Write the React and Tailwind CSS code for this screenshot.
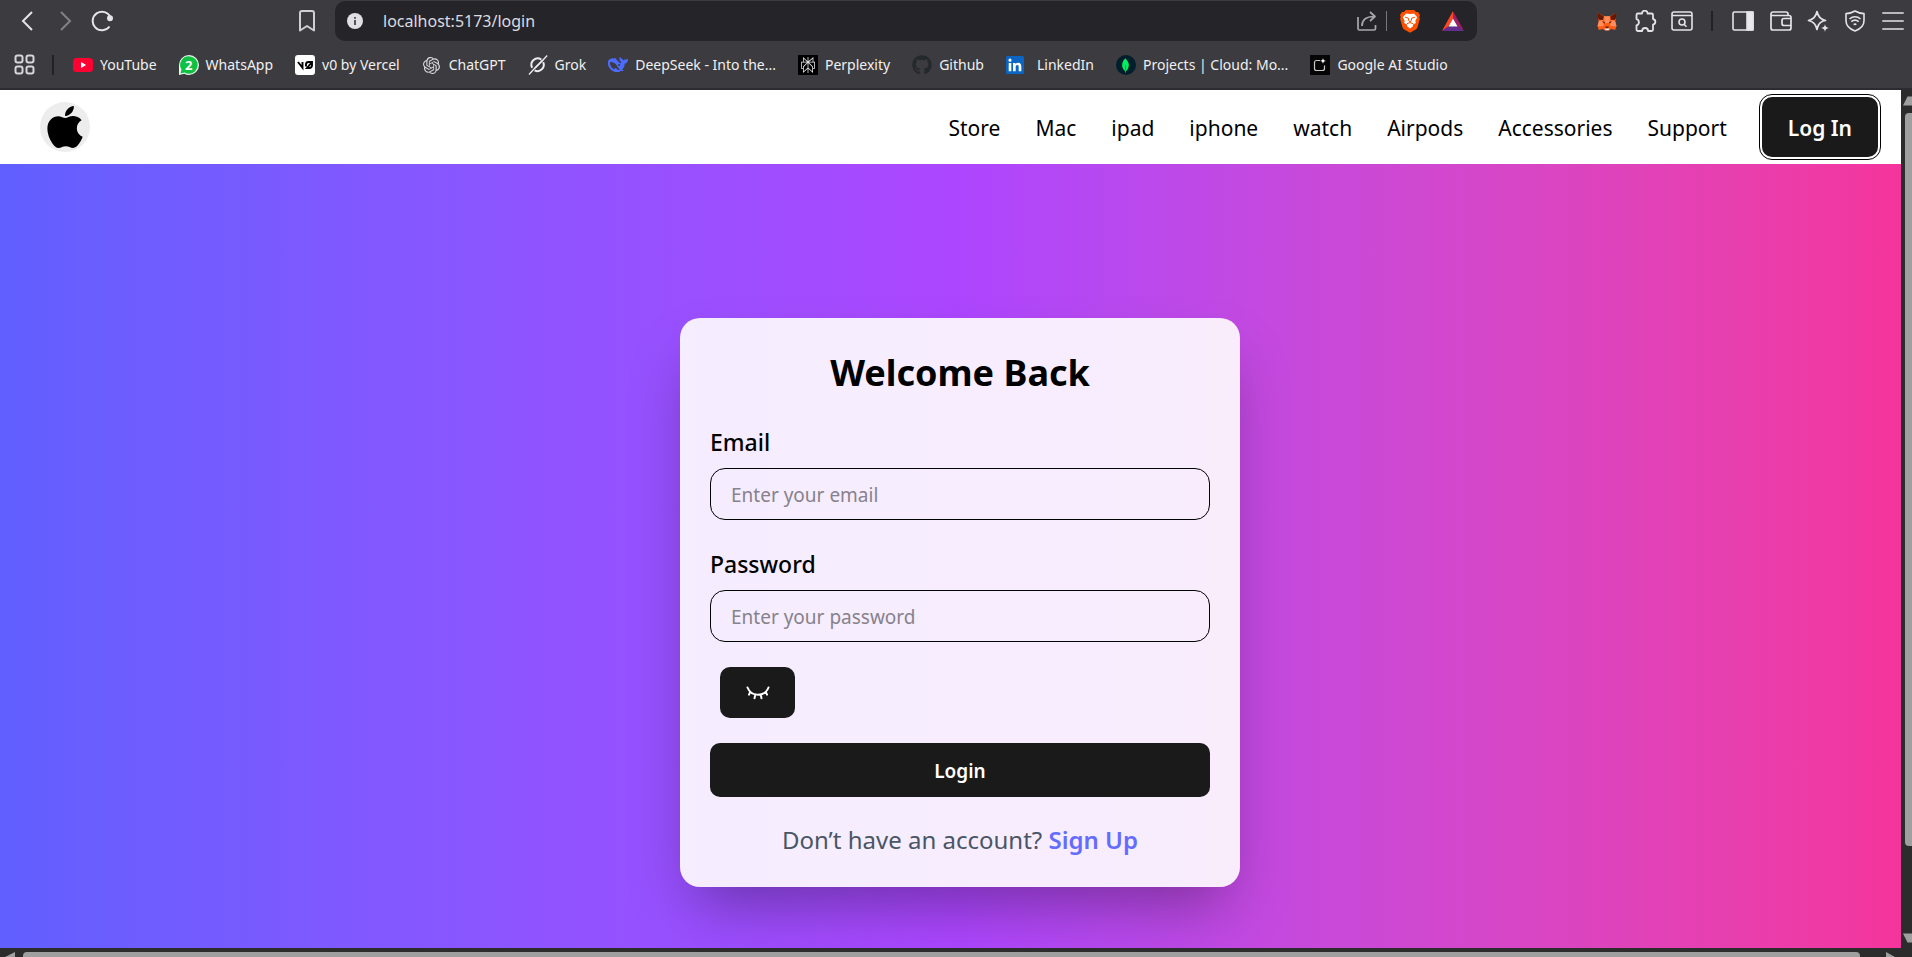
import React, { useState } from "react";
import { Eye } from "lucide-react";
import { FaApple, FaGithub } from "react-icons/fa";
import { SiOpenai, SiPerplexity, SiMongodb } from "react-icons/si";

function AppsIcon() {
  return (
    <svg viewBox="0 0 22 22" className="size-[22px]" fill="none" stroke="#d6d6d8" strokeWidth="2">
      <rect x="1.5" y="1.5" width="7" height="7" rx="2" />
      <rect x="12.5" y="1.5" width="7" height="7" rx="2" />
      <rect x="1.5" y="12.5" width="7" height="7" rx="2" />
      <rect x="12.5" y="12.5" width="7" height="7" rx="2" />
    </svg>
  );
}

function YouTubeIcon() {
  return (
    <svg viewBox="0 0 20 20" className="size-5">
      <rect x="0" y="3" width="20" height="14" rx="3.5" fill="#ff0033" />
      <path d="M8 7v6l5.2-3z" fill="#fff" />
    </svg>
  );
}

function WhatsAppIcon() {
  return (
    <span className="relative flex size-5 items-center justify-center">
      <svg viewBox="0 0 20 20" className="absolute inset-0 size-5">
        <path d="M10 0a10 10 0 0 1 0 20c-1.700 0-3.300-.4-4.700-1.200L0 20V10A10 10 0 0 1 10 0z" fill="#e9f7ec" />
        <path d="M10 1.300a8.700 8.700 0 0 1 0 17.400c-1.600 0-3.100-.4-4.400-1.200L1.500 18.500l.9-4A8.700 8.700 0 0 1 10 1.300z" fill="#0fc143" />
      </svg>
      <span className="relative text-[13px] leading-5 font-bold text-white">2</span>
    </span>
  );
}

function V0Icon() {
  return (
    <svg viewBox="0 0 20 20" className="size-5">
      <rect width="20" height="20" rx="3" fill="#fff" />
      <path d="M3 7l4.500 5.800V7M11 11.500v-2A2.500 2.500 0 0 1 13.500 7H17v3.500a2.500 2.500 0 0 1-2.500 2.500H12l4.600-5.300" fill="none" stroke="#000" strokeWidth="1.900" />
    </svg>
  );
}

function GrokIcon() {
  return (
    <svg viewBox="0 0 20 20" className="size-5" fill="none" stroke="#ededee" strokeWidth="2">
      <path d="M15.200 7.200A6.300 6.300 0 0 1 6.600 15.400M4.200 12.800A6.300 6.300 0 0 1 13.300 4.600" />
      <path d="M1 19.500L6 14l9-9 4.200-4.500" strokeWidth="1.300" />
      <path d="M7 13l8-8" strokeWidth="1.700" />
    </svg>
  );
}

function DeepSeekIcon() {
  return (
    <svg viewBox="0 0 24 24" className="size-5" fill="#4d6bfe">
      <path d="M23.700 4.500c-.3-.1-.4.1-.6.200-.4.500-1.100.9-1.900.8-1.100-.1-2 .3-2.900 1.100-.2-1.100-.8-1.700-1.700-2.100-.5-.2-1-.4-1.300-.9-.2-.3-.3-.7-.5-1.100-.1-.2-.4-.3-.6 0-.9 1.700-.5 4.100 1.500 5.600.2.200.3.300.2.600l-.3 1c-.1.200-.2.200-.4.200-.8-.4-1.500-.9-2.200-1.500-1.100-1.100-2.100-2.300-3.400-3.200-.8-.6.2-1.100.4-1.200.2-.1.100-.4-.7-.4s-1.500.300-2.400.6c-.9-.2-1.700-.2-2.600-.1C2.600 4.300 1.300 5.100.5 6.600c-.9 1.700-.7 4-.2 5.900.8 2.400 2.200 4.300 4 5.700 2.300 1.800 4.900 2.500 7.600 2.200 1.200-.1 2.500-.4 3.900-1.500.8.400 1.800.4 2.500.3.600-.1.500-.7.300-.8-1.600-.7-1.300-.5-1.600-.7.8-1 2.300-2.800 2.900-5.500v-1.500c0-.2.100-.3.300-.3 2.300-.3 3.400-2.100 3.600-4 .1-.6.200-1.600-.1-1.900z" />
      <path d="M11.900 17.700c-2.200-1.700-3.300-2.300-3.700-2.300s-.3.500-.2.800c.4 1.400-.9.900-1.600.5-1.600-1-2.900-2.700-3.400-4.300-.4-1-.8-2.600-.6-3.400.200-.9 1.700-.7 2.800-.4 2.200.4 3.900 1.800 5.100 3.700 1 1.700 2.100 3.500 3.600 5 .6.600-1.300.9-2 .4z" fill="#3c3b3f" />
      <circle cx="13.300" cy="12" r="1.200" fill="#3c3b3f" />
    </svg>
  );
}

function LinkedInIcon() {
  return (
    <span className="mr-1 flex size-5 items-center">
      <svg viewBox="0 0 18 18" className="size-[18px]">
        <rect width="18" height="18" rx="1.500" fill="#0a66c2" />
        <path d="M2.700 7h2.600v8.300H2.700zM4 2.600a1.500 1.500 0 1 1 0 3.100 1.500 1.500 0 0 1 0-3.100zM7 7h2.500v1.200c.5-.8 1.400-1.400 2.600-1.400 2.600 0 3.200 1.700 3.200 4v4.500h-2.600v-4c0-1 0-2.200-1.400-2.200s-1.600 1-1.600 2.100v4.100H7z" fill="#fff" />
      </svg>
    </span>
  );
}

function StudioIcon() {
  return (
    <svg viewBox="0 0 20 20" className="size-5">
      <rect width="20" height="20" fill="#050505" />
      <path d="M10 5.500H6.500a2 2 0 0 0-2 2v6a2 2 0 0 0 2 2h6a2 2 0 0 0 2-2V10.500" fill="none" stroke="#c8c8c8" strokeWidth="1.200" />
      <path d="M13 3c.3 1.900 1 2.600 2.900 2.900-1.900.3-2.600 1-2.900 2.900-.3-1.900-1-2.600-2.900-2.900 1.900-.3 2.600-1 2.900-2.900z" fill="#fff" />
    </svg>
  );
}

function FoxIcon() {
  return (
    <svg viewBox="0 0 20 20" className="size-5">
      <path d="M.8 1.800L7 5.200h6l6.200-3.400-.3 6.700-.9 2 1.500 4.600-1.300 4-4-1-2 1.400H7.800l-2-1.400-4 1L.5 15.100 2 10.500l-.9-2z" fill="#ff5c16" />
      <path d="M.8 1.800L6.800 5.500 6 9l-4-.2L.9 7zM19.200 1.800l-6 3.700L14 9l4-.2 1.100-1.800z" fill="#661800" />
      <path d="M1.800 10L6 9l1 4.500-1.200 1.700H.5zM18.200 10L14 9l-1 4.500 1.200 1.700h5.300z" fill="#ff8d5d" />
      <path d="M7.200 5.300h5.600L12.500 12h-5z" fill="#ff8d5d" />
      <path d="M5 10.200l3 .9-.7 1.600zM15 10.200l-3 .9.700 1.600zM8.200 15.600h3.600l-.5 1.600H8.700z" fill="#661800" />
      <path d="M7.500 17.400h5l-.9 1.900H8.400z" fill="#e7ebf6" />
    </svg>
  );
}

function BatIcon() {
  return (
    <svg viewBox="0 0 22 20" className="h-5 w-[22px]">
      <path d="M11 0L0 20l6.500-4.500L11 7.500z" fill="#ff4724" />
      <path d="M11 0l11 20-6.500-4.500L11 7.500z" fill="#9e1f63" />
      <path d="M0 20h22l-6.500-4.500h-9z" fill="#662d91" />
      <path d="M11 7.500l4.500 8h-9z" fill="#fff" />
    </svg>
  );
}

function BraveIcon() {
  return (
    <svg viewBox="0 0 20 23" className="h-[23px] w-5">
      <path d="M5.800 0h8.400l1.900 2.100 1.900-.2L20 5l-.7 2 .6 1.700-2.400 8.600c-.3 1-.9 1.700-1.700 2.200L10 22.800l-5.800-3.300c-.8-.5-1.400-1.200-1.700-2.200L.1 8.700.7 7 0 5l2-3.100 1.900.2z" fill="#ff4f00" />
      <path d="M6 3.500l4 .6 4-.6 3.200 3.700-1.900 3.700.6 2-3.200 1.900.3 1.500-3 2.200-3-2.200.3-1.500-3.200-1.900.6-2L2.800 7.200z" fill="#fff" />
      <path d="M5 7.200l3.200.8.6 2.800 1.200 1M15 7.200l-3.200.8-.6 2.800-1.200 1M7 13.700l3-1.200 3 1.200M10 11.800v.7" fill="none" stroke="#ff4f00" strokeWidth="1" />
    </svg>
  );
}

function EyeClosedIcon() {
  return (
    <svg viewBox="0 0 24 14" className="h-[14px] w-6" fill="none" stroke="currentColor" strokeWidth="2" strokeLinecap="round" strokeLinejoin="round">
      <path d="M1.500 1.500c1.700 4.400 5.800 7.200 10.500 7.200s8.800-2.800 10.500-7.200M4.300 5.800L3 8.700M9.300 8.600l-.8 3.600M14.700 8.600l.8 3.600M19.700 5.800L21 8.700" />
    </svg>
  );
}

const lineIcon = "fill-none stroke-[#e4e4e6]";

const bookmarks = [
  { label: "YouTube", icon: <YouTubeIcon /> },
  { label: "WhatsApp", icon: <WhatsAppIcon /> },
  { label: "v0 by Vercel", icon: <V0Icon /> },
  { label: "ChatGPT", icon: <span className="flex size-5 items-center justify-center"><SiOpenai className="size-[17px] text-[#dcdcde]" /></span> },
  { label: "Grok", icon: <GrokIcon /> },
  { label: "DeepSeek - Into the...", icon: <DeepSeekIcon /> },
  { label: "Perplexity", icon: <span className="flex size-5 items-center justify-center bg-black"><SiPerplexity className="size-4 text-[#e8e8e8]" /></span> },
  { label: "Github", icon: <FaGithub className="size-5 text-[#24292e]" /> },
  { label: "LinkedIn", icon: <LinkedInIcon /> },
  { label: "Projects | Cloud: Mo...", icon: <span className="flex size-5 items-center justify-center rounded-full bg-[#001e2b]"><SiMongodb className="size-[15px] text-[#00ed64]" /></span> },
  { label: "Google AI Studio", icon: <StudioIcon /> },
];

function BrowserChrome() {
  return (
    <div className="shrink-0 border-b-2 border-[#2d2a32] bg-[#3c3b3f] text-[#f0f0f1]">
      <div className="flex h-[42px] items-start">
        <div className="flex h-[42px] w-[335px] shrink-0 items-center pr-5 pl-[17px]">
          <button aria-label="Back" className="mr-[18px]">
            <svg viewBox="0 0 20 22" className={`h-[22px] w-5 ${lineIcon}`} strokeWidth="2"><path d="M15 2L6 11l9 9" /></svg>
          </button>
          <button aria-label="Forward" className="mr-4">
            <svg viewBox="0 0 20 22" className="h-[22px] w-5 fill-none stroke-[#828185]" strokeWidth="2"><path d="M6 2l9 9-9 9" /></svg>
          </button>
          <button aria-label="Reload">
            <svg viewBox="0 0 22 22" className={`size-[22px] ${lineIcon}`} strokeWidth="2">
              <path d="M18.500 16.500A9.300 9.300 0 1 1 19.600 7.500" />
              <circle cx="19" cy="8.300" r="2" fill="#e4e4e6" />
            </svg>
          </button>
          <button aria-label="Bookmark this tab" className="ml-auto">
            <svg viewBox="0 0 16 22" className="h-[22px] w-4 fill-none stroke-[#d0d0d2]" strokeWidth="2" strokeLinejoin="round">
              <path d="M1 3a2 2 0 0 1 2-2h10a2 2 0 0 1 2 2v17.500l-7-4.500-7 4.500z" />
            </svg>
          </button>
        </div>
        <div className="mt-px flex h-10 flex-1 items-center rounded-[10px] bg-[#252429] pr-[13px] pl-3">
          <svg viewBox="0 0 16 16" className="size-4">
            <circle cx="8" cy="8" r="8" fill="#e0e0e4" />
            <path d="M7 7h2v5H7zM7 4h2v1.800H7z" fill="#55545a" />
          </svg>
          <input
            aria-label="Address"
            defaultValue="localhost:5173/login"
            className="ml-5 min-w-0 flex-1 bg-transparent text-[16px] text-[#dcdce0] outline-none"
          />
          <button aria-label="Share">
            <svg viewBox="0 0 20 20" className="size-5 fill-none stroke-[#a9a8ad]" strokeWidth="1.700" strokeLinejoin="round">
              <path d="M1 6v11.500a1.500 1.500 0 0 0 1.500 1.500h14.500a1.500 1.500 0 0 0 1.500-1.500V14M5 15c0-6 4-9.500 12-9.500M13 1l5 4.500-5 4.500" />
            </svg>
          </button>
          <span className="mr-[13px] ml-[9px] h-5 w-px bg-[#77767b]" />
          <button aria-label="Brave Shields"><BraveIcon /></button>
          <button aria-label="Rewards" className="ml-[22px]"><BatIcon /></button>
        </div>
        <div className="flex h-[42px] w-[435px] shrink-0 items-center justify-end pr-2">
          <button aria-label="MetaMask" className="mr-[18px]"><FoxIcon /></button>
          <button aria-label="Extensions" className="mr-[14px]">
            <svg viewBox="0 0 22 22" className={`size-[22px] ${lineIcon}`} strokeWidth="1.800" strokeLinejoin="round">
              <path d="M1.500 5a1.500 1.500 0 0 1 1.500-1.500h4a2.800 2.800 0 0 1 5.600 0h3.900A1.500 1.500 0 0 1 18 5v4a2.900 2.900 0 0 1 0 5.700v4.800a1.500 1.500 0 0 1-1.500 1.500h-3.400a3 3 0 0 0-6 0H3a1.500 1.500 0 0 1-1.500-1.500v-4.200a3.200 3.200 0 0 0 0-6.200z" />
            </svg>
          </button>
          <button aria-label="Search tabs">
            <svg viewBox="0 0 22 20" className={`h-5 w-[22px] ${lineIcon}`} strokeWidth="1.600">
              <rect x="1" y="1" width="20" height="18" rx="2" />
              <path d="M1 4.500h20M13 13.200l2.500 2.500" />
              <circle cx="11" cy="11" r="3" />
            </svg>
          </button>
          <span className="mr-[19px] ml-[18px] h-5 w-[2px] bg-[#222126]" />
          <button aria-label="Sidebar" className="mr-4">
            <svg viewBox="0 0 22 20" className={`h-5 w-[22px] ${lineIcon}`} strokeWidth="1.600">
              <rect x="1" y="1" width="20" height="18" rx="1.500" />
              <path d="M15 1h6v18h-6z" fill="#e9e9eb" />
            </svg>
          </button>
          <button aria-label="Wallet" className="mr-[15px]">
            <svg viewBox="0 0 22 20" className={`h-5 w-[22px] ${lineIcon}`} strokeWidth="1.700">
              <path d="M18 4.500V3a2 2 0 0 0-2-2H3a2 2 0 0 0-2 2v14a2 2 0 0 0 2 2h16a2 2 0 0 0 2-2V6.500a2 2 0 0 0-2-2H1M21 7.500h-7a2 2 0 0 0-2 2v3a2 2 0 0 0 2 2h7" />
            </svg>
          </button>
          <button aria-label="Assistant" className="mr-4">
            <svg viewBox="0 0 22 22" className={`size-[22px] ${lineIcon}`} strokeWidth="1.700" strokeLinejoin="round">
              <path d="M10 1.500c1 5 3 8 8.500 9-3.500.7-5.800 2-7 4.500-.7 1.300-1.100 2.800-1.500 4.500-1-5.200-3.500-8-8.500-9 5-1 7.500-4 8.500-9z" />
              <path d="M18 14c.4 2.600 1.200 3.500 4 4-2.800.5-3.600 1.400-4 4-.4-2.600-1.200-3.500-4-4 2.800-.5 3.600-1.400 4-4z" fill="#e4e4e6" stroke="none" />
            </svg>
          </button>
          <button aria-label="VPN" className="mr-[17px]">
            <svg viewBox="0 0 20 22" className={`h-[22px] w-5 ${lineIcon}`} strokeWidth="1.600" strokeLinejoin="round">
              <path d="M10 1c3 1.800 5.600 2.600 9 2.600v7.200c0 4.700-4 8.400-9 10.200-5-1.800-9-5.500-9-10.200V3.600C4.400 3.600 7 2.800 10 1z" />
              <path d="M4.500 9c3.300-2.800 7.700-2.800 11 0M6.300 11.700c2.200-1.900 5.200-1.900 7.400 0" />
              <ellipse cx="10" cy="14.300" rx="1.600" ry="1" fill="#e4e4e6" stroke="none" />
            </svg>
          </button>
          <button aria-label="Menu">
            <svg viewBox="0 0 22 18" className="h-[18px] w-[22px] stroke-[#b9b9bc]" strokeWidth="2" strokeLinecap="round"><path d="M1 1h20M1 9h20M1 17h20" /></svg>
          </button>
        </div>
      </div>
      <div className="flex h-[46px] items-center pl-[14px]">
        <button aria-label="All apps"><AppsIcon /></button>
        <span className="mr-[19px] ml-4 h-5 w-[2px] bg-[#222126]" />
        <nav aria-label="Bookmarks" className="flex items-center gap-[22px]">
          {bookmarks.map((b) => (
            <a key={b.label} href="#" className="flex items-center gap-[7px] text-[14px] leading-5 whitespace-nowrap">
              {b.icon}
              <span className="pb-px">{b.label}</span>
            </a>
          ))}
        </nav>
      </div>
    </div>
  );
}

const links = ["Store", "Mac", "ipad", "iphone", "watch", "Airpods", "Accessories", "Support"];

function SiteHeader() {
  return (
    <header className="flex h-[74px] shrink-0 items-center bg-white pr-[23px] pl-10 text-black">
      <a href="#" aria-label="Apple" className="flex size-[50px] items-center justify-center rounded-full bg-[#ededed]">
        <FaApple className="size-12" />
      </a>
      <nav className="ml-auto flex items-center gap-[35px] text-[21px]">
        {links.map((l) => (
          <a key={l} href="#" className="pt-[3px]">{l}</a>
        ))}
        <button className="h-[60px] rounded-[10px] bg-[#1a1a1a] px-[26px] pt-[3px] font-semibold text-white outline-1 outline-offset-2 outline-black">
          Log In
        </button>
      </nav>
    </header>
  );
}

function Field({ id, label, ...rest }) {
  return (
    <div>
      <label htmlFor={id} className="block text-[23px] leading-[38px] font-medium text-black">{label}</label>
      <input
        id={id}
        className="mt-[7px] block h-[52px] w-full rounded-[15px] border border-black bg-transparent px-5 pt-[2px] text-[19px] text-black placeholder:text-[#87828b]"
        {...rest}
      />
    </div>
  );
}

function LoginCard() {
  const [visible, setVisible] = useState(false);
  return (
    <form
      onSubmit={(e) => e.preventDefault()}
      className="flex w-full max-w-[560px] flex-col rounded-[20px] bg-white/90 p-[30px] shadow-[0_31px_62px_-15px_rgba(0,0,0,0.35)]"
    >
      <h1 className="mb-[26px] text-center text-[36px] leading-[49px] font-bold text-black">Welcome Back</h1>
      <div className="flex flex-col gap-[25px]">
        <Field id="email" label="Email" type="email" placeholder="Enter your email" />
        <Field id="password" label="Password" type={visible ? "text" : "password"} placeholder="Enter your password" />
        <button
          type="button"
          aria-label="Show password"
          onClick={() => setVisible(!visible)}
          className="ml-[10px] flex h-[51px] w-[75px] items-center justify-center rounded-[10px] bg-[#1a1a1a] text-white"
        >
          {visible ? <Eye className="size-6" /> : <EyeClosedIcon />}
        </button>
        <button className="h-[54px] rounded-[10px] bg-[#1a1a1a] pt-[2px] text-[19px] font-semibold text-white">Login</button>
      </div>
      <p className="mt-6 -mb-[2px] text-center text-[24px] leading-[38px] text-[#4a5565]">
        Don’t have an account? <a href="#" className="font-semibold text-[#646cff]">Sign Up</a>
      </p>
    </form>
  );
}

const thumb = "bg-[#9f9f9f]";

export default function App() {
  return (
    <div className="flex h-screen flex-col overflow-hidden bg-[#2c2c2c] font-['Noto_Sans',sans-serif]">
      <BrowserChrome />
      <div className="flex min-h-0 flex-1">
        <div className="flex min-w-0 flex-1 flex-col">
          <SiteHeader />
          <div className="min-h-0 flex-1 overflow-hidden">
            <main className="flex w-[calc(100%+19px)] justify-center bg-linear-to-r from-[#615fff] via-[#ad46ff] to-[#f6339a] py-[154px]">
              <LoginCard />
            </main>
          </div>
        </div>
        <div className="flex w-[11px] shrink-0 flex-col items-end overflow-hidden pt-[6px] pb-[5px]">
          <svg viewBox="0 0 10 10" className="h-[10px] w-[9px]" fill="#9f9f9f"><path d="M0 10L5 0h5v10z" /></svg>
          <span className={`mt-[7px] mb-[87px] w-[7px] flex-1 rounded-l-[4px] ${thumb}`} />
          <svg viewBox="0 0 10 10" className="h-[10px] w-[9px]" fill="#9f9f9f"><path d="M0 0h10v10H5z" /></svg>
        </div>
      </div>
      <div className="flex h-[9px] shrink-0 items-end overflow-hidden pr-[17px] pl-[5px]">
        <svg viewBox="0 0 10 5" className="h-[5px] w-[10px]" fill="#9f9f9f"><path d="M0 5L10 0v5z" /></svg>
        <span className={`mr-[26px] ml-2 h-[5px] flex-1 rounded-t-[4px] ${thumb}`} />
        <svg viewBox="0 0 9 5" className="h-[5px] w-[9px]" fill="#9f9f9f"><path d="M0 0l9 5H0z" /></svg>
      </div>
    </div>
  );
}
